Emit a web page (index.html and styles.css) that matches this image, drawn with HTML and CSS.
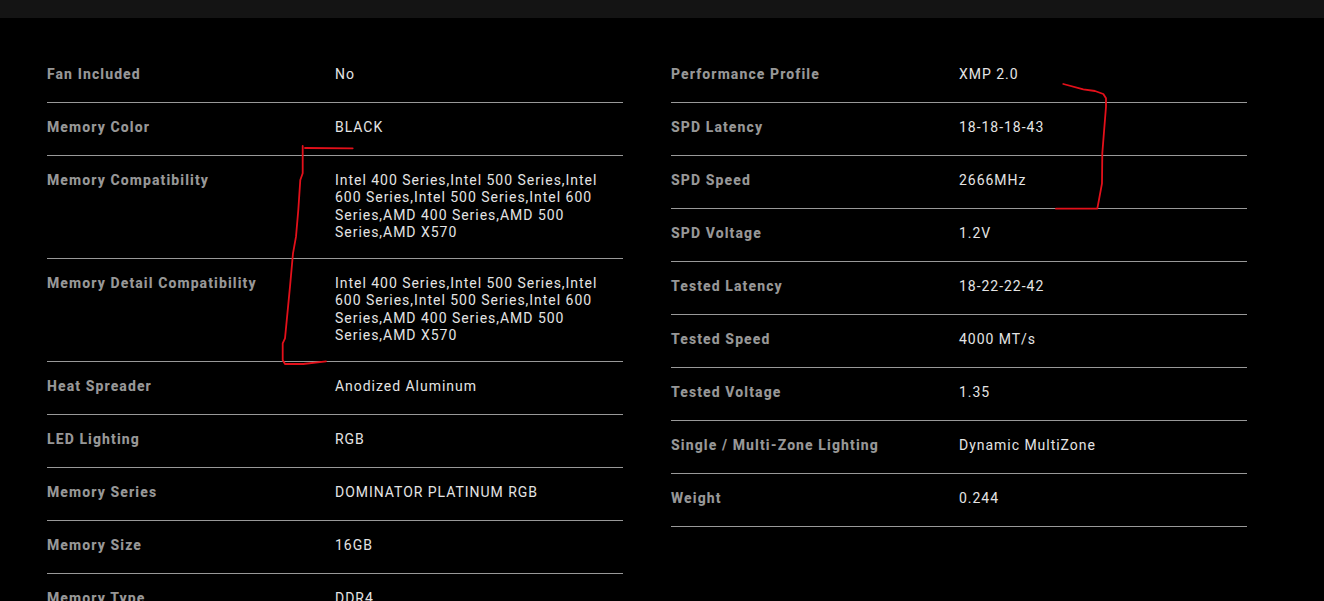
FILE: index.html
```html
<!DOCTYPE html>
<html lang="en">
<head>
<meta charset="utf-8">
<title>Specifications</title>
<link rel="stylesheet" href="styles.css">
</head>
<body>
<div class="topbar"></div>
<main class="specs">
  <dl class="col">
    <div class="row"><dt>Fan Included</dt><dd>No</dd></div>
    <div class="row"><dt>Memory Color</dt><dd>BLACK</dd></div>
    <div class="row"><dt>Memory Compatibility</dt><dd>Intel 400 Series,Intel 500 Series,Intel 600 Series,Intel 500 Series,Intel 600 Series,AMD 400 Series,AMD 500 Series,AMD X570</dd></div>
    <div class="row"><dt>Memory Detail Compatibility</dt><dd>Intel 400 Series,Intel 500 Series,Intel 600 Series,Intel 500 Series,Intel 600 Series,AMD 400 Series,AMD 500 Series,AMD X570</dd></div>
    <div class="row"><dt>Heat Spreader</dt><dd>Anodized Aluminum</dd></div>
    <div class="row"><dt>LED Lighting</dt><dd>RGB</dd></div>
    <div class="row"><dt>Memory Series</dt><dd>DOMINATOR PLATINUM RGB</dd></div>
    <div class="row"><dt>Memory Size</dt><dd>16GB</dd></div>
    <div class="row"><dt>Memory Type</dt><dd>DDR4</dd></div>
  </dl>
  <dl class="col">
    <div class="row"><dt>Performance Profile</dt><dd>XMP 2.0</dd></div>
    <div class="row"><dt>SPD Latency</dt><dd>18-18-18-43</dd></div>
    <div class="row"><dt>SPD Speed</dt><dd>2666MHz</dd></div>
    <div class="row"><dt>SPD Voltage</dt><dd>1.2V</dd></div>
    <div class="row"><dt>Tested Latency</dt><dd>18-22-22-42</dd></div>
    <div class="row"><dt>Tested Speed</dt><dd>4000 MT/s</dd></div>
    <div class="row"><dt>Tested Voltage</dt><dd>1.35</dd></div>
    <div class="row"><dt>Single / Multi-Zone Lighting</dt><dd>Dynamic MultiZone</dd></div>
    <div class="row"><dt>Weight</dt><dd>0.244</dd></div>
  </dl>
</main>
<svg class="ink" width="1324" height="601" viewBox="0 0 1324 601" aria-hidden="true">
  <path d="M302.7 146L302.7 173.3L300.3 180L298.3 210L296 236.7L293 253.3L290 286.7L285 338.3L282.7 343.3L282.7 360L285 364L303.3 364L326 361.3"/>
  <path d="M305 148L352.7 148.3"/>
  <path d="M1063.3 84L1083.3 89.3L1095 91L1103.3 94L1106 98.3L1106 106.7L1102.3 153.3L1102 183.3L1098.3 203.3L1097.3 208.7L1056 208.7"/>
</svg>
</body>
</html>
```
FILE: styles.css
```css
html, body {
  margin: 0;
  height: 601px;
  overflow: hidden;
  background: #000;
}
body {
  position: relative;
  font-family: "Roboto", "Liberation Sans", sans-serif;
  font-size: 14px;
  line-height: 17.4px;
}
.topbar {
  height: 18px;
  background: #141414;
}
.specs {
  display: flex;
  gap: 48px;
  padding: 32px 77px 0 47px;
}
.col {
  flex: 1 1 0;
  margin: 0;
}
.row {
  display: flex;
  min-height: 20px;
  padding: 16px 0;
  border-bottom: 1px solid #999;
}
.row dt {
  flex: 0 0 50%;
  font-weight: 800;
  letter-spacing: 1.1px;
  color: #979797;
}
.row dd {
  flex: 0 0 50%;
  margin: 0;
  padding-bottom: 0.4px;
  letter-spacing: 0.97px;
  color: #e4e4e4;
}
.ink {
  position: absolute;
  left: 0;
  top: 0;
  pointer-events: none;
}
.ink path {
  fill: none;
  stroke: #e3101a;
  stroke-width: 1.8;
  stroke-linejoin: round;
  stroke-linecap: round;
}
```
